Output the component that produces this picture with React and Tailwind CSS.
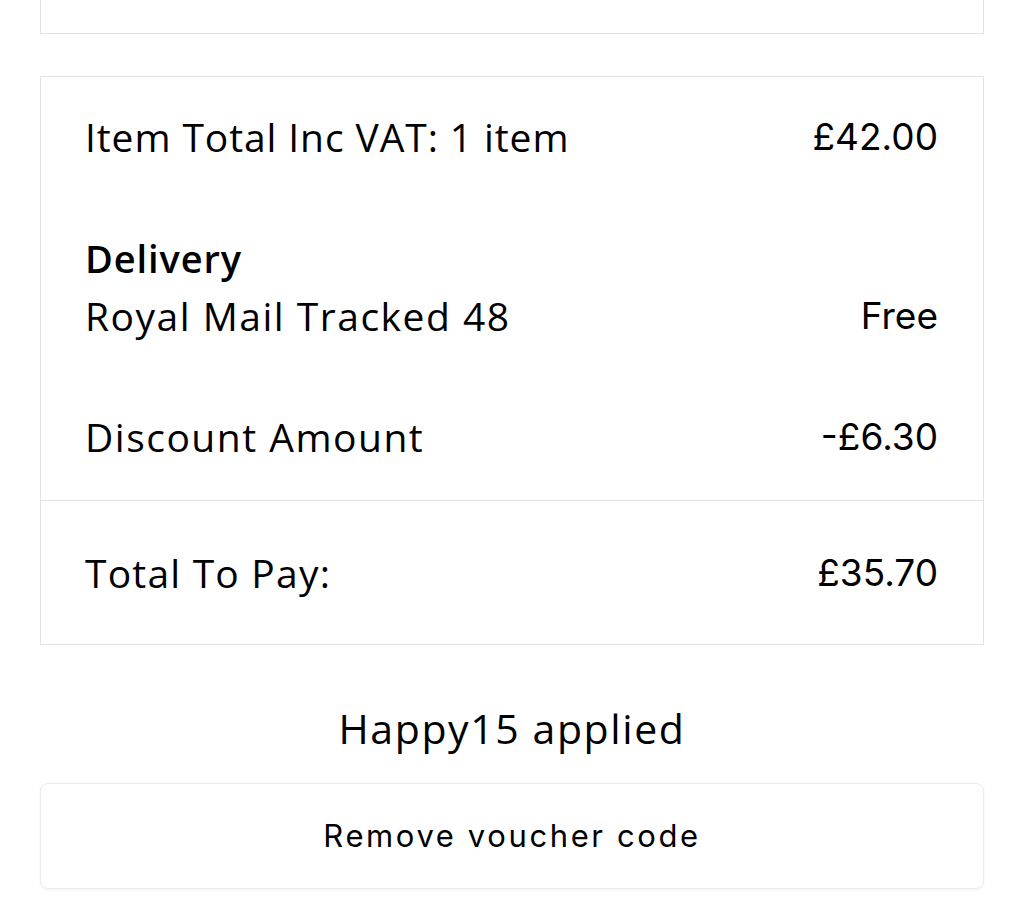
import React from 'react';

const label = "font-['Open_Sans',sans-serif] tracking-[0.9px]";
const amount = "font-['Inter',sans-serif]";

const Row = ({ children, value }) => (
  <div className="flex items-center justify-between">
    <div>{children}</div>
    <span className={`${amount} text-[37px] leading-[58px] text-black`}>{value}</span>
  </div>
);

const App = () => {
  return (
    <div className="min-h-[910px] w-full bg-white px-[40px] pb-[22px]">
      {/* tail of the card above */}
      <div className="h-[34px] border-x border-b border-[#e3e3e3]" />

      {/* order summary */}
      <div className="mt-[42px] border border-[#e3e3e3] text-black">
        <div className="flex flex-col gap-[63px] pl-[44px] pr-[45px] pt-[31px] pb-[34px]">
          <Row value="£42.00">
            <span className={`${label} text-[39px] leading-[58px]`}>Item Total Inc VAT: 1 item</span>
          </Row>
          <div className="flex flex-col">
            <span className={`${label} text-[38px] font-semibold leading-[58px]`}>Delivery</span>
            <Row value="Free">
              <span className={`${label} text-[39px] leading-[58px] tracking-[1.5px]`}>Royal Mail Tracked 48</span>
            </Row>
          </div>
          <Row value="-£6.30">
            <span className={`${label} text-[39px] leading-[58px] tracking-[1.5px]`}>Discount Amount</span>
          </Row>
        </div>
        <div className="border-t border-[#e3e3e3] pl-[44px] pr-[45px] pt-[43px] pb-[42px]">
          <Row value="£35.70">
            <span className={`${label} text-[39px] leading-[58px] tracking-[1.2px]`}>Total To Pay:</span>
          </Row>
        </div>
      </div>

      {/* voucher */}
      <p className="mt-[53px] text-center font-['Open_Sans',sans-serif] text-[41px] leading-[60px] tracking-[1.6px] text-black">
        Happy15 applied
      </p>
      <button
        type="button"
        className={`${amount} mt-[25px] flex h-[106px] w-full items-center justify-center rounded-[8px] border border-[#ececec] bg-white text-[31px] tracking-[2.6px] text-black shadow-[0_1px_3px_rgba(0,0,0,0.06)]`}
      >
        Remove voucher code
      </button>
    </div>
  );
};

export default App;
